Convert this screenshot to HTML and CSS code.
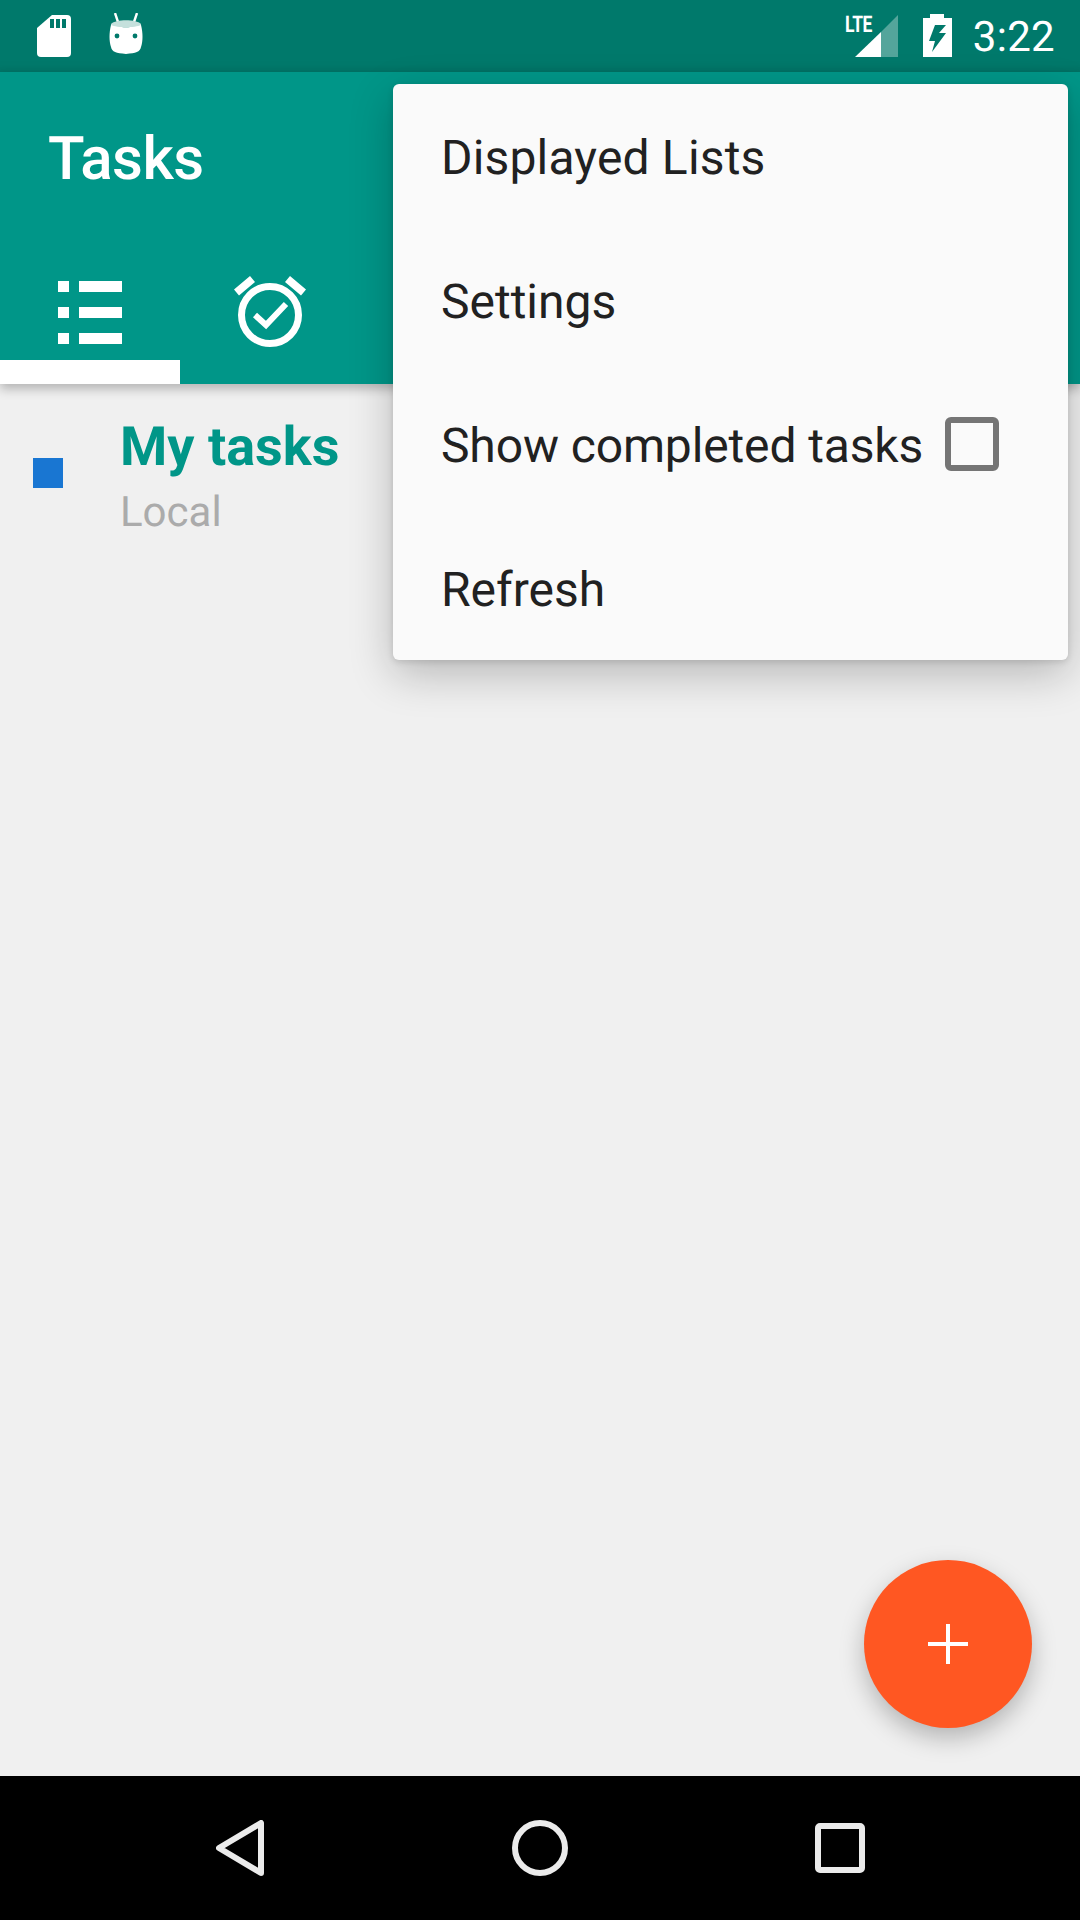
FILE: index.html
```html
<!DOCTYPE html>
<html lang="en">
<head>
<meta charset="utf-8">
<title>Tasks</title>
<link rel="stylesheet" href="styles.css">
</head>
<body>
<div class="phone">
  <header class="status-bar">
    <div class="status-left">
      <svg class="ic-sd" viewBox="0 0 34 42" width="34" height="42"><path fill="#fff" d="M15 0H30a4 4 0 0 1 4 4V38a4 4 0 0 1-4 4H4a4 4 0 0 1-4-4V13Z"/><path fill="#00796B" d="M13 4h4v9h-4zM19 4h4v9h-4zM25 4h4v9h-4z"/></svg>
      <svg class="ic-droid" viewBox="0 0 36 42" width="36" height="42"><path stroke="#fff" stroke-width="2.4" d="M7 0l3 9M29 0l-3 9" fill="none"/><path fill="#C5E0DC" d="M3 11C8 6 28 6 33 11v3H3Z"/><path fill="#fff" d="M3 12c6 3 24 3 30 0 2 8 2 16 0 22-1 5-5 6-15 7C8 40 4 39 3 34 1 28 1 20 3 12Z"/><circle cx="9" cy="23" r="2.4" fill="#00796B"/><circle cx="27" cy="23" r="2.4" fill="#00796B"/></svg>
    </div>
    <div class="status-right">
      <div class="signal">
        <span class="lte">LTE</span>
        <svg class="ic-signal" viewBox="0 0 43 42" width="43" height="42"><path fill="#fff" fill-opacity=".33" d="M43 0V42H26V17Z"/><path fill="#fff" d="M26 17V42H0Z"/></svg>
      </div>
      <svg class="ic-battery" viewBox="0 0 29 43" width="29" height="43"><path fill="#fff" fill-rule="evenodd" d="M7 0H21V4H29V43H0V4H7ZM12 11 6 27H12L9 38 23 19H16L23 11Z"/></svg>
      <span class="clock">3:22</span>
    </div>
  </header>

  <section class="app-bar">
    <h1 class="title">Tasks</h1>
    <nav class="tabs">
      <div class="tab tab-active">
        <svg viewBox="0 0 64 64" width="64" height="64"><path fill="#fff" d="M0 0h11v11H0zM21 0h43v11H21zM0 26h11v11H0zM21 26h43v11H21zM0 52h11v11H0zM21 52h43v11H21z"/></svg>
      </div>
      <div class="tab tab-clock">
        <svg viewBox="0 0 72 72" width="72" height="72"><circle cx="36" cy="40" r="28.500" fill="none" stroke="#fff" stroke-width="7"/><path fill="none" stroke="#fff" stroke-width="6" d="M21 40l11 10 20-21"/><path fill="#fff" d="M0 14.500 16 1l5 6L5 20.500zM72 14.500 56 1l-5 6 16 13.500z"/></svg>
      </div>
    </nav>
  </section>

  <main class="content">
    <div class="list-row">
      <span class="swatch"></span>
      <div class="list-text">
        <div class="list-name">My tasks</div>
        <div class="list-account">Local</div>
      </div>
    </div>
    <button class="fab" type="button" aria-label="Add">
      <svg viewBox="0 0 40 40" width="40" height="40"><path fill="#fff" d="M18 0h4v18h18v4H22v18h-4V22H0v-4h18Z"/></svg>
    </button>
  </main>

  <footer class="nav-bar">
    <svg viewBox="0 0 48 56" width="48" height="56"><path fill="none" stroke="#EBEBEB" stroke-width="6" stroke-linejoin="round" d="M45 3V53L3 28Z" /></svg>
    <svg viewBox="0 0 56 56" width="56" height="56"><circle cx="28" cy="28" r="25" fill="none" stroke="#EBEBEB" stroke-width="6"/></svg>
    <svg viewBox="0 0 50 50" width="50" height="50"><rect x="3" y="3" width="44" height="44" rx="2" fill="none" stroke="#EBEBEB" stroke-width="6"/></svg>
  </footer>

  <div class="menu">
    <div class="menu-item menu-item-wide">Displayed Lists</div>
    <div class="menu-item">Settings</div>
    <div class="menu-item menu-item-tight">Show completed tasks<span class="checkbox"></span></div>
    <div class="menu-item">Refresh</div>
  </div>
</div>
</body>
</html>
```
FILE: styles.css
```css
* { box-sizing: border-box; }
html, body { margin: 0; padding: 0; }
body { font-family: Roboto, "Liberation Sans", sans-serif; text-rendering: geometricPrecision; }

.phone {
  position: relative;
  width: 1080px;
  height: 1920px;
  display: flex;
  flex-direction: column;
  background: #F0F0F0;
  overflow: hidden;
}

.status-bar {
  height: 72px;
  flex: none;
  display: flex;
  justify-content: space-between;
  background: #00796B;
  color: #fff;
  box-shadow: inset 0 -14px 10px -10px rgba(0,0,0,.05);
}
.status-left { display: flex; align-items: flex-start; padding: 15px 0 0 37px; gap: 37px; }
.ic-droid { margin-top: -2px; }
.status-right { display: flex; align-items: flex-start; padding: 0 25px 0 0; }
.signal { position: relative; width: 43px; height: 72px; margin-right: 25px; }
.lte {
  position: absolute;
  left: -10px;
  top: 13px;
  font: 700 23px/24px Roboto, sans-serif;
  letter-spacing: -.5px;
  transform: scaleX(.76);
  transform-origin: left;
}
.ic-signal { position: absolute; left: 0; top: 15px; }
.ic-battery { margin-top: 14px; margin-right: 21px; }
.clock { font: 400 42px/76px Roboto, sans-serif; letter-spacing: .3px; height: 72px; }

.app-bar {
  position: relative;
  z-index: 1;
  height: 312px;
  flex: none;
  display: flex;
  flex-direction: column;
  justify-content: space-between;
  background: #009688;
  color: #fff;
  box-shadow: 0 5px 10px rgba(0,0,0,.25);
}
.title { margin: 0; padding: 52px 0 0 48px; font: 500 60px/70px Roboto, sans-serif; letter-spacing: -.5px; }
.tabs { display: flex; }
.tab { width: 180px; height: 120px; display: flex; justify-content: center; padding-top: 17px; }
.tab-clock { padding-top: 11px; }
.tab-active { border-bottom: 24px solid #fff; }

.content { position: relative; flex: 1; }
.list-row { display: flex; align-items: center; padding: 31px 0 0 33px; }
.swatch { width: 30px; height: 30px; background: #1976D2; margin: 0 57px 14px 0; }
.list-name { font: 700 54px/66px Roboto, sans-serif; color: #009688; }
.list-account { font: 400 42px/64px Roboto, sans-serif; color: #ABABAB; }

.fab {
  position: absolute;
  right: 48px;
  bottom: 48px;
  width: 168px;
  height: 168px;
  padding: 0;
  border: 0;
  border-radius: 50%;
  display: flex;
  align-items: center;
  justify-content: center;
  background: #FF5722;
  box-shadow: 0 10px 24px rgba(0,0,0,.25);
}
.fab svg { display: block; }

.nav-bar {
  height: 144px;
  flex: none;
  display: grid;
  grid-template-columns: 48px 56px 50px;
  justify-content: start;
  align-items: center;
  padding-left: 216px;
  column-gap: 248px;
  background: #000;
}
.nav-bar svg { display: block; }
.nav-bar svg:last-child { margin-left: -1px; }

.menu {
  position: absolute;
  z-index: 2;
  left: 393px;
  top: 84px;
  width: 675px;
  background: #FAFAFA;
  border-radius: 6px;
  box-shadow: 0 14px 44px rgba(0,0,0,.24), 0 2px 6px rgba(0,0,0,.12);
}
.menu-item {
  height: 144px;
  padding: 3px 0 0 48px;
  display: flex;
  align-items: center;
  font: 400 48px/56px Roboto, sans-serif;
  color: #212121;
}
.menu-item-wide { letter-spacing: .17px; }
.menu-item-tight { letter-spacing: -.13px; }
.checkbox {
  width: 54px;
  height: 54px;
  margin: -3px 0 0 22px;
  border: 6px solid #757575;
  border-radius: 6px;
}
```
